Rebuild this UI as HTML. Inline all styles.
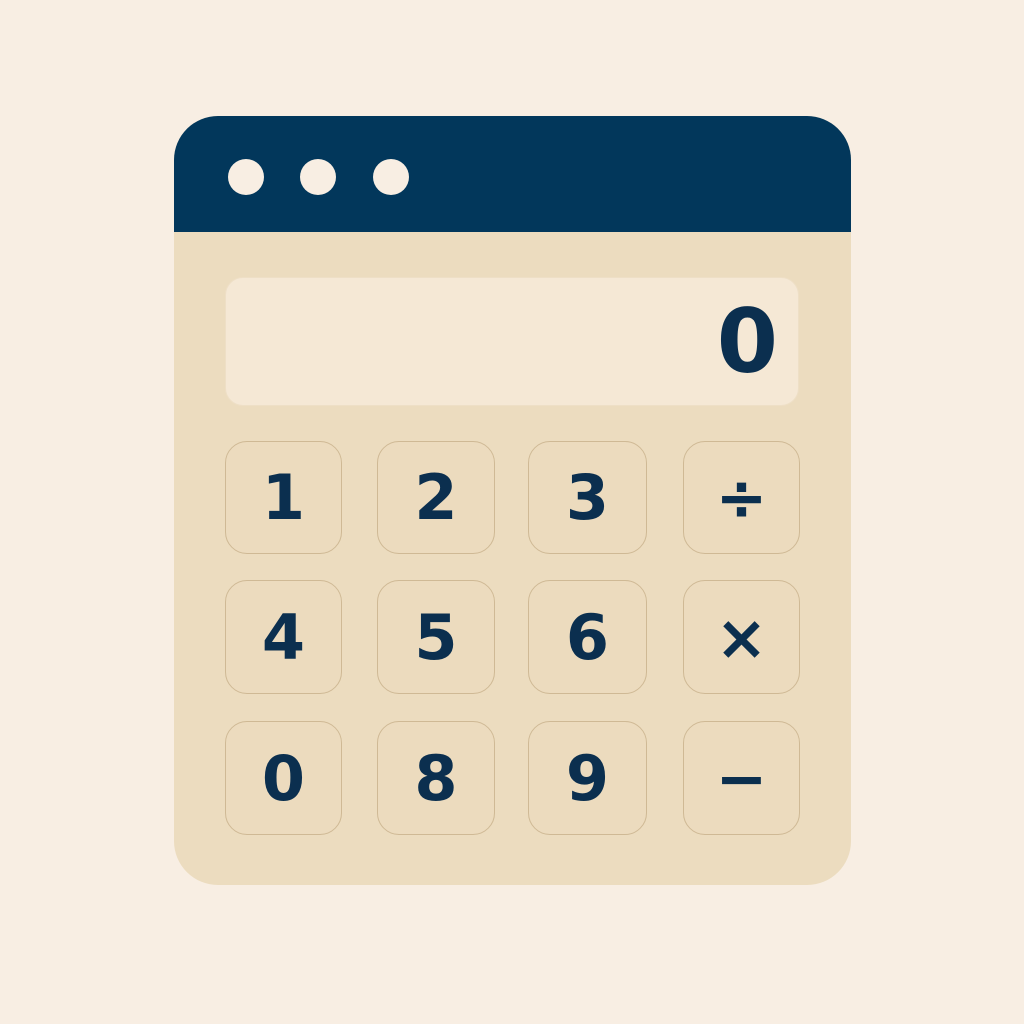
<!DOCTYPE html>
<html><head><style>
body{margin:0;width:1024px;height:1024px;background:#f8eee3;position:relative;font-family:"DejaVu Sans","Liberation Sans",sans-serif;overflow:hidden}
.win{position:absolute;left:174px;top:116px;width:677px;height:769px;border-radius:44px;background:#ecdcbf;overflow:hidden}
.hdr{position:absolute;left:0;top:0;width:100%;height:116px;background:#02375b}
.dot{position:absolute;top:43px;width:36px;height:36px;border-radius:50%;background:#f8eee3}
.disp{position:absolute;left:225px;top:277px;width:574px;height:129px;border-radius:18px;background:#f5e8d5;box-sizing:border-box;border:1px solid #eedfc6}
.disp span{position:absolute;right:20px;top:14px;font-size:88px;font-weight:bold;color:#0b2f4f;line-height:100px}
.b{position:absolute;box-sizing:border-box;border:1.5px solid #cfb995;border-radius:22px;background:#ecdbbe;color:#0b2f4f;font-weight:bold;font-size:62px;display:flex;align-items:center;justify-content:center}
</style></head><body>
<div class="win"><div class="hdr">
<div class="dot" style="left:54px"></div><div class="dot" style="left:126px"></div><div class="dot" style="left:199px"></div>
</div></div>
<div class="disp"><span>0</span></div>
<div class="b" style="left:225px;top:441px;width:117px;height:113px">1</div>
<div class="b" style="left:377px;top:441px;width:118px;height:113px">2</div>
<div class="b" style="left:528px;top:441px;width:119px;height:113px">3</div>
<div class="b" style="left:683px;top:441px;width:117px;height:113px">÷</div>
<div class="b" style="left:225px;top:580px;width:117px;height:114px">4</div>
<div class="b" style="left:377px;top:580px;width:118px;height:114px">5</div>
<div class="b" style="left:528px;top:580px;width:119px;height:114px">6</div>
<div class="b" style="left:683px;top:580px;width:117px;height:114px">×</div>
<div class="b" style="left:225px;top:721px;width:117px;height:114px">0</div>
<div class="b" style="left:377px;top:721px;width:118px;height:114px">8</div>
<div class="b" style="left:528px;top:721px;width:119px;height:114px">9</div>
<div class="b" style="left:683px;top:721px;width:117px;height:114px">−</div>
</body></html>
